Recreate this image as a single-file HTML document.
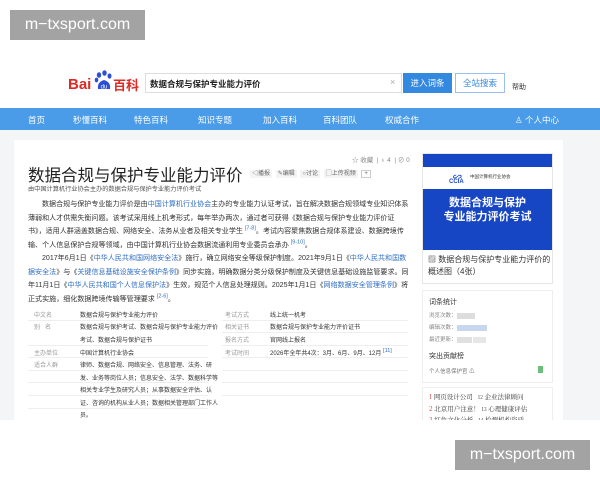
<!DOCTYPE html>
<html><head><meta charset="utf-8"><style>
*{margin:0;padding:0;box-sizing:border-box}
body{width:600px;height:480px;overflow:hidden;background:#fff;font-family:"Liberation Sans","Noto Sans CJK SC",sans-serif;position:relative;color:#333}
.a{position:absolute;white-space:nowrap}
.wm{position:absolute;background:#a3a3a3;color:#fff;font-size:16px;text-align:center;font-family:"Liberation Sans",sans-serif}
.nav{position:absolute;left:0;top:108px;width:600px;height:22px;background:#4a9be8;color:#fff;font-size:8.5px}
.nav span{position:absolute;top:6px}
.p{position:absolute;left:28px;width:382px;font-size:7.05px;line-height:13.5px;color:#333;text-indent:14px}
.l{color:#2f6ec4}
sup{font-size:5.5px;color:#2f6ec4;line-height:0}
.t{position:absolute;font-size:6px;color:#333;white-space:nowrap}
.g{color:#999}
.hr{position:absolute;height:1px;background:#eee}
</style></head><body>
<div class="wm" style="left:10px;top:10px;width:135px;height:30px;line-height:30px">m−txsport.com</div>

<div class="a" style="left:68px;top:76px;font-size:15px;font-weight:bold;color:#de2a25">Bai</div>
<div class="a" style="left:94px;top:70px;width:19px;height:22px">
<svg width="19" height="22" viewBox="0 0 19 22"><ellipse cx="5" cy="5" rx="2.2" ry="2.8" fill="#2d4fd4"/><ellipse cx="10.5" cy="3" rx="2.2" ry="2.8" fill="#2d4fd4"/><ellipse cx="15.5" cy="6" rx="2" ry="2.6" fill="#2d4fd4"/><ellipse cx="2.5" cy="10" rx="1.8" ry="2.4" fill="#2d4fd4"/><path d="M4 19 Q3 12 10 10 Q17 12 16 19 Z" fill="#2d4fd4"/><text x="10" y="18.5" font-size="6" fill="#fff" text-anchor="middle" font-family="Liberation Sans">du</text></svg></div>
<div class="a" style="left:113px;top:75px;font-size:13px;font-weight:bold;color:#de2a25">百科</div>
<div class="a" style="left:145px;top:73px;width:257px;height:20px;border:1px solid #ddd"></div>
<div class="a" style="left:150px;top:78px;font-size:8.5px;color:#222;font-weight:bold">数据合规与保护专业能力评价</div>
<div class="a" style="left:390px;top:77px;font-size:9px;color:#aaa">×</div>
<div class="a" style="left:403px;top:73px;width:49px;height:20px;background:#3388e0;color:#fff;font-size:8.5px;text-align:center;line-height:20px">进入词条</div>
<div class="a" style="left:455px;top:73px;width:50px;height:20px;border:1px solid #9ac1ee;color:#3388e0;font-size:8.5px;text-align:center;line-height:18px">全站搜索</div>
<div class="a" style="left:512px;top:82px;font-size:7px;color:#333">帮助</div>

<div class="nav"><span style="left:28px">首页</span><span style="left:73px">秒懂百科</span><span style="left:134px">特色百科</span><span style="left:198px">知识专题</span><span style="left:263px">加入百科</span><span style="left:323px">百科团队</span><span style="left:385px">权威合作</span><span style="left:515px">♙ 个人中心</span></div>

<div class="a" style="left:0;top:130px;width:600px;height:290px;background:#f4f5f6"></div>
<div class="a" style="left:14px;top:140px;width:549px;height:280px;background:#fff"></div>

<div class="a" style="left:352px;top:154px;font-size:6.5px;color:#888">☆ 收藏 &nbsp;| ♁ 4 &nbsp;| ⊘ 0</div>
<div class="a" style="left:28px;top:162px;font-size:16.5px;color:#222">数据合规与保护专业能力评价</div>
<div class="a" style="left:250px;top:168px;font-size:6px;color:#666;word-spacing:2px"><span style="background:#f4f4f4;padding:1px 2px">◁播报</span> <span style="background:#f4f4f4;padding:1px 2px">✎编辑</span> <span style="background:#f4f4f4;padding:1px 2px">○讨论</span> <span style="background:#f4f4f4;padding:1px 2px">▢上传视频</span> <span style="border:1px solid #ccc;padding:0 2px">+</span></div>
<div class="a" style="left:28px;top:184px;font-size:6.2px;color:#555">由中国计算机行业协会主办的数据合规与保护专业能力评价考试</div>

<div class="p" style="top:198px">数据合规与保护专业能力评价是由<span class="l">中国计算机行业协会</span>主办的专业能力认证考试，旨在解决数据合规领域专业知识体系薄弱和人才供需失衡问题。该考试采用线上机考形式，每年举办两次，通过者可获得《数据合规与保护专业能力评价证书》，适用人群涵盖数据合规、网络安全、法务从业者及相关专业学生 <sup>[7-8]</sup>。考试内容聚焦数据合规体系建设、数据跨境传输、个人信息保护合规等领域，由中国计算机行业协会数据流通利用专业委员会承办 <sup>[9-10]</sup>。</div>
<div class="p" style="top:252px">2017年6月1日《<span class="l">中华人民共和国网络安全法</span>》施行，确立网络安全等级保护制度。2021年9月1日《<span class="l">中华人民共和国数据安全法</span>》与《<span class="l">关键信息基础设施安全保护条例</span>》同步实施，明确数据分类分级保护制度及关键信息基础设施监管要求。同年11月1日《<span class="l">中华人民共和国个人信息保护法</span>》生效，规范个人信息处理规则。2025年1月1日《<span class="l">网络数据安全管理条例</span>》将正式实施，细化数据跨境传输等管理要求 <sup>[2-6]</sup>。</div>

<div class="hr" style="left:28px;top:320px;width:180px"></div><div class="hr" style="left:222px;top:320px;width:186px"></div>
<div class="hr" style="left:28px;top:345px;width:180px"></div><div class="hr" style="left:222px;top:332px;width:186px"></div>
<div class="hr" style="left:28px;top:357px;width:180px"></div><div class="hr" style="left:222px;top:345px;width:186px"></div>
<div class="hr" style="left:28px;top:370px;width:180px"></div><div class="hr" style="left:222px;top:357px;width:186px"></div>
<div class="hr" style="left:28px;top:382px;width:180px"></div><div class="hr" style="left:222px;top:370px;width:186px"></div>
<div class="hr" style="left:28px;top:395px;width:180px"></div><div class="hr" style="left:222px;top:382px;width:186px"></div>
<div class="hr" style="left:28px;top:408px;width:180px"></div><div class="hr" style="left:222px;top:395px;width:186px"></div>
<div class="t g" style="left:34px;top:310px">中文名</div><div class="t" style="left:80px;top:310px">数据合规与保护专业能力评价</div>
<div class="t g" style="left:34px;top:322px">别 &nbsp;&nbsp;名</div><div class="t" style="left:80px;top:322px">数据合规与保护考试、数据合规与保护专业能力评价</div>
<div class="t" style="left:80px;top:335px">考试、数据合规与保护证书</div>
<div class="t g" style="left:34px;top:348px">主办单位</div><div class="t" style="left:80px;top:348px">中国计算机行业协会</div>
<div class="t g" style="left:34px;top:360px">适合人群</div><div class="t" style="left:80px;top:360px">律师、数据合规、网络安全、信息管理、法务、研</div>
<div class="t" style="left:80px;top:373px">发、业务等岗位人员；信息安全、法学、数据科学等</div>
<div class="t" style="left:80px;top:385px">相关专业学生及研究人员；从事数据安全评估、认</div>
<div class="t" style="left:80px;top:398px">证、咨询的机构从业人员；数据相关管理部门工作人</div>
<div class="t" style="left:80px;top:410px">员。</div>
<div class="t g" style="left:225px;top:310px">考试方式</div><div class="t" style="left:270px;top:310px">线上统一机考</div>
<div class="t g" style="left:225px;top:322px">相关证书</div><div class="t" style="left:270px;top:322px">数据合规与保护专业能力评价证书</div>
<div class="t g" style="left:225px;top:335px">报名方式</div><div class="t" style="left:270px;top:335px">官网线上报名</div>
<div class="t g" style="left:225px;top:348px">考试时间</div><div class="t" style="left:270px;top:348px">2026年全年共4次：3月、6月、9月、12月 <sup>[11]</sup></div>

<div class="a" style="left:422px;top:153px;width:131px;height:131px;border:1px solid #e6e6e6;background:#fff"></div>
<div class="a" style="left:423px;top:154px;width:129px;height:96px;background:#1746c4"></div>
<div class="a" style="left:423px;top:167px;width:129px;height:22px;background:#fff"></div>
<div class="a" style="left:452px;top:170px;font-size:9px;font-weight:bold;color:#1746c4;font-style:italic">∽</div>
<div class="a" style="left:449px;top:179px;font-size:6px;font-weight:bold;color:#1746c4">CCIA</div>
<div class="a" style="left:470px;top:174px;font-size:4.5px;color:#333">中国计算机行业协会</div>
<div class="a" style="left:423px;top:196px;width:129px;text-align:center;font-size:11px;font-weight:bold;color:#fff;line-height:14px">数据合规与保护<br>专业能力评价考试</div>
<div class="a" style="left:428px;top:254px;font-size:8px;color:#333;line-height:12px;white-space:normal;width:124px">▨ 数据合规与保护专业能力评价的概述图（4张）</div>

<div class="a" style="left:422px;top:290px;width:131px;height:93px;border:1px solid #eee;background:#fff"></div>
<div class="a" style="left:429px;top:297px;font-size:7px;color:#333">词条统计</div>
<div class="a" style="left:429px;top:311px;font-size:5.5px;color:#888">浏览次数：<span style="background:#ddd;color:#ddd">000000</span></div>
<div class="a" style="left:429px;top:323px;font-size:5.5px;color:#888">编辑次数：<span style="background:#c8d6ee;color:#c8d6ee">0000000000</span></div>
<div class="a" style="left:429px;top:335px;font-size:5.5px;color:#888">最近更新：<span style="background:#e0e0e0;color:#e0e0e0">00000</span> <span style="background:#e6e6e6;color:#e6e6e6">0000</span></div>
<div class="a" style="left:429px;top:351px;font-size:7px;color:#333">突出贡献榜</div>
<div class="a" style="left:429px;top:367px;font-size:5.5px;color:#777">个人信息保护官 ⚠</div>
<div class="a" style="left:538px;top:366px;width:5px;height:7px;background:#6cbf7a"></div>

<div class="a" style="left:422px;top:387px;width:131px;height:33px;border:1px solid #eee;border-bottom:none;background:#fff"></div>
<div class="a" style="left:429px;top:392px;font-size:6.5px;color:#333;line-height:10.5px;font-family:'Noto Serif CJK SC',serif"><span style="color:#c33">1</span> 网页设计公司 &nbsp;&nbsp;<span style="font-size:5px">12</span> 企业法律顾问<br><span style="color:#c33">2</span> 北京用户注意！ <span style="font-size:5px">13</span> 心理健康评估<br><span style="color:#c33">3</span> 红色文化分析 &nbsp;&nbsp;<span style="font-size:5px">14</span> 检测机构资质</div>
<div class="a" style="left:0;top:420px;width:600px;height:60px;background:#fff"></div>

<div class="wm" style="left:455px;top:440px;width:135px;height:30px;line-height:30px">m−txsport.com</div>
</body></html>
